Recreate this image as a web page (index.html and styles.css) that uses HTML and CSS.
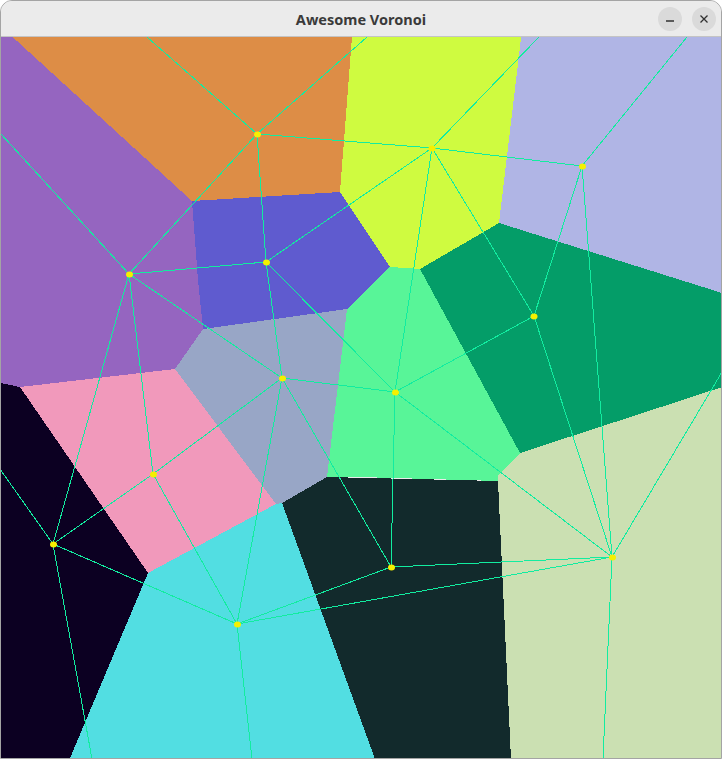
FILE: index.html
```html
<!DOCTYPE html>
<html>
<head>
<meta charset="utf-8">
<title>Awesome Voronoi</title>
<link rel="stylesheet" href="styles.css">
</head>
<body>
<div class="window">
  <header class="titlebar">
    <div class="spacer"></div>
    <h1 class="title">Awesome Voronoi</h1>
    <div class="controls">
      <button class="btn" aria-label="Minimize">
        <svg width="10" height="10" viewBox="0 0 10 10"><line x1="1" y1="7" x2="9" y2="7" class="glyph"/></svg>
      </button>
      <button class="btn" aria-label="Close">
        <svg width="10" height="10" viewBox="0 0 10 10"><path d="M1.5 1.5 L8.5 8.5 M8.5 1.5 L1.5 8.5" class="glyph"/></svg>
      </button>
    </div>
  </header>
  <svg class="canvas" width="720" height="721" viewBox="1 37 720 721">
    <g class="cells">
      <polygon fill="#dd8d46" points="5,30 352.5,30 340,192 192,201"/>
      <polygon fill="#cffb40" points="352.5,30 522,30 499,223 420,269 390,267 340,192"/>
      <polygon fill="#b0b5e5" points="522,30 730,30 730,295.5 499,223"/>
      <polygon fill="#9565c0" points="-10,30 5,30 192,201 198,280 203,329 175,369 20,387 -10,381"/>
      <polygon fill="#5f5bcf" points="192,201 340,192 390,267 347,309 203,329 198,280"/>
      <polygon fill="#049d68" points="420,269 499,223 730,295.5 730,384.5 520,453"/>
      <polygon fill="#98a6c6" points="175,369 203,329 347,309 327,477 282,503 276,504"/>
      <polygon fill="#58f598" points="390,267 420,269 520,453 498,475 498,481 360,477 327,477 347,309"/>
      <polygon fill="#f199bb" points="20,387 175,369 276,504 148,573"/>
      <polygon fill="#0c0022" points="-10,381 20,387 148,573 65,770 -10,770"/>
      <polygon fill="#52dee2" points="148,573 276,504 282,503 379,770 65,770"/>
      <polygon fill="#122a2c" points="282,503 327,477 498,481 511.5,770 379,770"/>
      <polygon fill="#cbe0b2" points="498,475 520,453 730,384.5 730,770 511.5,770 498,481"/>
    </g>
    <g class="edges">
      <line x1="257" y1="134" x2="432" y2="148"/>
      <line x1="257" y1="134" x2="129" y2="274"/>
      <line x1="257" y1="134" x2="266" y2="262"/>
      <line x1="257" y1="134" x2="139" y2="30"/>
      <line x1="257" y1="134" x2="375" y2="30"/>
      <line x1="432" y1="148" x2="582" y2="166"/>
      <line x1="432" y1="148" x2="266" y2="262"/>
      <line x1="432" y1="148" x2="395" y2="392"/>
      <line x1="432" y1="148" x2="534" y2="316"/>
      <line x1="432" y1="148" x2="545.7" y2="30"/>
      <line x1="582" y1="166" x2="534" y2="316"/>
      <line x1="582" y1="166" x2="612" y2="557"/>
      <line x1="582" y1="166" x2="692.7" y2="30"/>
      <line x1="129" y1="274" x2="266" y2="262"/>
      <line x1="129" y1="274" x2="282" y2="378"/>
      <line x1="129" y1="274" x2="153" y2="474"/>
      <line x1="129" y1="274" x2="53" y2="544"/>
      <line x1="129" y1="274" x2="-10" y2="122"/>
      <line x1="266" y1="262" x2="282" y2="378"/>
      <line x1="266" y1="262" x2="395" y2="392"/>
      <line x1="282" y1="378" x2="395" y2="392"/>
      <line x1="282" y1="378" x2="153" y2="474"/>
      <line x1="282" y1="378" x2="237" y2="624"/>
      <line x1="282" y1="378" x2="391" y2="567"/>
      <line x1="395" y1="392" x2="534" y2="316"/>
      <line x1="395" y1="392" x2="391" y2="567"/>
      <line x1="395" y1="392" x2="612" y2="557"/>
      <line x1="534" y1="316" x2="612" y2="557"/>
      <line x1="153" y1="474" x2="53" y2="544"/>
      <line x1="153" y1="474" x2="237" y2="624"/>
      <line x1="53" y1="544" x2="237" y2="624"/>
      <line x1="53" y1="544" x2="-10" y2="455"/>
      <line x1="53" y1="544" x2="94" y2="770"/>
      <line x1="237" y1="624" x2="391" y2="567"/>
      <line x1="237" y1="624" x2="612" y2="557"/>
      <line x1="237" y1="624" x2="253.2" y2="770"/>
      <line x1="391" y1="567" x2="612" y2="557"/>
      <line x1="612" y1="557" x2="730" y2="358.5"/>
      <line x1="612" y1="557" x2="602.5" y2="770"/>
    </g>
    <g class="sites">
      <ellipse cx="257.5" cy="134.5" rx="3.5" ry="3"/>
      <ellipse cx="432" cy="148.5" rx="3.5" ry="3"/>
      <ellipse cx="582.5" cy="166.5" rx="3.5" ry="3"/>
      <ellipse cx="129.5" cy="274.5" rx="3.5" ry="3"/>
      <ellipse cx="266.5" cy="262.5" rx="3.5" ry="3"/>
      <ellipse cx="534" cy="316.5" rx="3.5" ry="3"/>
      <ellipse cx="282.5" cy="378.5" rx="3.5" ry="3"/>
      <ellipse cx="395.5" cy="392.5" rx="3.5" ry="3"/>
      <ellipse cx="153.5" cy="474.5" rx="3.5" ry="3"/>
      <ellipse cx="53.5" cy="544.5" rx="3.5" ry="3"/>
      <ellipse cx="391.5" cy="567.5" rx="3.5" ry="3"/>
      <ellipse cx="612.5" cy="557.5" rx="3.5" ry="3"/>
      <ellipse cx="237.5" cy="624.5" rx="3.5" ry="3"/>
    </g>
  </svg>
</div>
</body>
</html>
```

FILE: styles.css
```css
html, body {
  margin: 0;
  padding: 0;
  background: #ffffff;
}

.window {
  width: 722px;
  height: 759px;
  box-sizing: border-box;
  border: 1px solid #a4a4a4;
  border-radius: 12px 12px 0 0;
  overflow: hidden;
  display: flex;
  flex-direction: column;
  background: #ebebeb;
}

.titlebar {
  height: 35px;
  flex: 0 0 35px;
  border-bottom: 1px solid #c4c4c4;
  background: #ebebeb;
  display: grid;
  grid-template-columns: 1fr auto 1fr;
  align-items: center;
  padding-right: 5px;
}

.title {
  margin: 0;
  font-family: "Noto Sans", "DejaVu Sans", sans-serif;
  font-weight: 700;
  font-size: 14.5px;
  color: #3a3a3a;
  letter-spacing: 0;
  padding-left: 5px;
}

.controls {
  display: flex;
  justify-content: flex-end;
  gap: 10px;
}

.btn {
  width: 24px;
  height: 24px;
  border: none;
  border-radius: 50%;
  background: #dadada;
  padding: 0;
  display: flex;
  align-items: center;
  justify-content: center;
}

.glyph {
  stroke: #303030;
  stroke-width: 1.3;
  fill: none;
}

.canvas {
  display: block;
  flex: 0 0 auto;
}

.cells polygon {
  shape-rendering: crispEdges;
}

.edges line {
  stroke: #12eca0;
  stroke-width: 1;
  shape-rendering: crispEdges;
}

.sites ellipse {
  fill: #f5f000;
}
```
